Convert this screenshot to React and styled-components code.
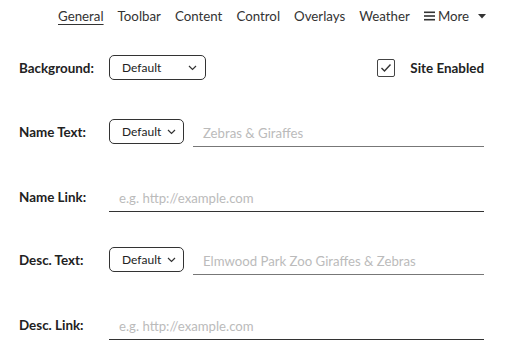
import React from 'react';
import styled, { createGlobalStyle } from 'styled-components';

const Global = createGlobalStyle`
  body {
    margin: 0;
    background: #fff;
    font-family: Lato, "Open Sans", sans-serif;
    color: #333;
  }
`

const Page = styled.div`
  width: 516px;
  height: 358px;
  overflow: hidden;
`

const Nav = styled.nav`
  display: flex;
  align-items: center;
  gap: 14px;
  padding: 8px 0 0 58px;
  height: 16px;
  font-size: 13.3px;
`

const NavItem = styled.span`
  color: #333;
  text-decoration: ${p => (p.active ? 'underline' : 'none')};
  text-underline-offset: 3px;
`

const More = styled.span`
  display: flex;
  align-items: center;
  gap: 3px;
`

const Form = styled.div`
  padding: 31px 32px 0 19px;
`

const Row = styled.div`
  display: flex;
  align-items: center;
  height: 25px;
  margin-bottom: ${p => p.gap || 39}px;
`

const Label = styled.div`
  width: 90px;
  flex: none;
  font-weight: bold;
  font-size: 13.4px;
  color: #222;
`

const Select = styled.div`
  box-sizing: border-box;
  width: ${p => p.width}px;
  height: 25px;
  border: 1px solid #333;
  border-radius: 5px;
  display: flex;
  align-items: center;
  justify-content: space-between;
  padding: 0 ${p => p.pr}px 0 ${p => p.pl}px;
  font-size: 12px;
  color: #222;
  flex: none;
`

const Input = styled.div`
  flex: 1;
  align-self: stretch;
  box-sizing: border-box;
  height: ${p => p.h}px;
  margin-left: ${p => p.ml || 0}px;
  border-bottom: 1px solid ${p => p.line};
  padding: 0 10px;
  display: flex;
  align-items: center;
  font-size: 13.2px;
  color: #bbb;
`

const Check = styled.div`
  margin-left: auto;
  display: flex;
  align-items: center;
  gap: 15px;
  font-weight: bold;
  font-size: 13.4px;
  color: #222;
`

const Box = styled.div`
  box-sizing: border-box;
  width: 18px;
  height: 18px;
  border: 1.5px solid #444;
  border-radius: 2px;
  display: flex;
  align-items: center;
  justify-content: center;
`

const Chevron = () => (
  <svg width="9" height="6" viewBox="0 0 9 6">
    <path d="M1 1 L4.5 4.5 L8 1" fill="none" stroke="#333" strokeWidth="1.2" />
  </svg>
)

const App = () => (
  <Page>
    <Global />
    <Nav>
      <NavItem active>General</NavItem>
      <NavItem>Toolbar</NavItem>
      <NavItem>Content</NavItem>
      <NavItem>Control</NavItem>
      <NavItem>Overlays</NavItem>
      <NavItem>Weather</NavItem>
      <More>
        <svg width="11" height="10" viewBox="0 0 11 10">
          <rect x="0" y="0.5" width="11" height="1.6" fill="#333" />
          <rect x="0" y="4.2" width="11" height="1.6" fill="#333" />
          <rect x="0" y="7.9" width="11" height="1.6" fill="#333" />
        </svg>
        <span>More</span>
        <svg width="8" height="5" viewBox="0 0 8 5" style={{ marginLeft: 6 }}>
          <path d="M0 0 L8 0 L4 4.5 Z" fill="#333" />
        </svg>
      </More>
    </Nav>
    <Form>
      <Row gap={39}>
        <Label>Background:</Label>
        <Select width={97} pl={12} pr={8}>
          <span>Default</span>
          <Chevron />
        </Select>
        <Check>
          <Box>
            <svg width="12" height="10" viewBox="0 0 12 10">
              <path d="M1.5 5 L4.5 8 L10.5 1.5" fill="none" stroke="#333" strokeWidth="1.4" />
            </svg>
          </Box>
          <span>Site Enabled</span>
        </Check>
      </Row>
      <Row gap={40}>
        <Label>Name Text:</Label>
        <Select width={75} pl={12} pr={7}>
          <span>Default</span>
          <Chevron />
        </Select>
        <Input ml={9} h={28} line="#777">Zebras &amp; Giraffes</Input>
      </Row>
      <Row gap={38}>
        <Label>Name Link:</Label>
        <Input h={28} line="#333">e.g. http://example.com</Input>
      </Row>
      <Row gap={40}>
        <Label>Desc. Text:</Label>
        <Select width={75} pl={12} pr={7}>
          <span>Default</span>
          <Chevron />
        </Select>
        <Input ml={9} h={28} line="#777">Elmwood Park Zoo Giraffes &amp; Zebras</Input>
      </Row>
      <Row>
        <Label>Desc. Link:</Label>
        <Input h={28} line="#333">e.g. http://example.com</Input>
      </Row>
    </Form>
  </Page>
)

export default App;
